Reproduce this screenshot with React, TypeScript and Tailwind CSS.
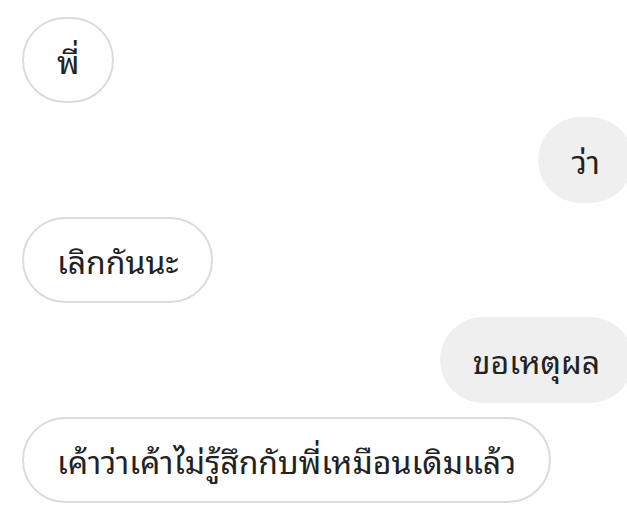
const messages = [
  { text: "พี่", mine: false },
  { text: "ว่า", mine: true },
  { text: "เลิกกันนะ", mine: false },
  { text: "ขอเหตุผล", mine: true },
  { text: "เค้าว่าเค้าไม่รู้สึกกับพี่เหมือนเดิมแล้ว", mine: false },
];

export default function App() {
  return (
    <div
      className="w-[627px] h-[515px] overflow-hidden bg-white"
      style={{
        fontFamily:
          '"Noto Sans Thai Looped", "Sarabun", "Loma", "Garuda", "Noto Sans Thai", "Noto Sans", sans-serif',
      }}
    >
      <div className="flex flex-col gap-[14px] pt-[17px] pl-[22px] -mr-[6px]">
        {messages.map((m, i) => (
          <div key={i} className={m.mine ? "flex justify-end" : "flex justify-start"}>
            <div
              className={
                m.mine
                  ? "h-[86px] flex items-center px-[33px] rounded-full bg-[#efefef] text-[#222] text-[32px]"
                  : "h-[86px] flex items-center px-[33px] rounded-full border-2 border-[#dcdcdc] bg-white text-[#222] text-[32px]"
              }
            >
              {m.text}
            </div>
          </div>
        ))}
        <div className="pl-[33px] text-[20px] text-[#999] leading-none">ดูเหมือนว่า</div>
      </div>
    </div>
  );
}
